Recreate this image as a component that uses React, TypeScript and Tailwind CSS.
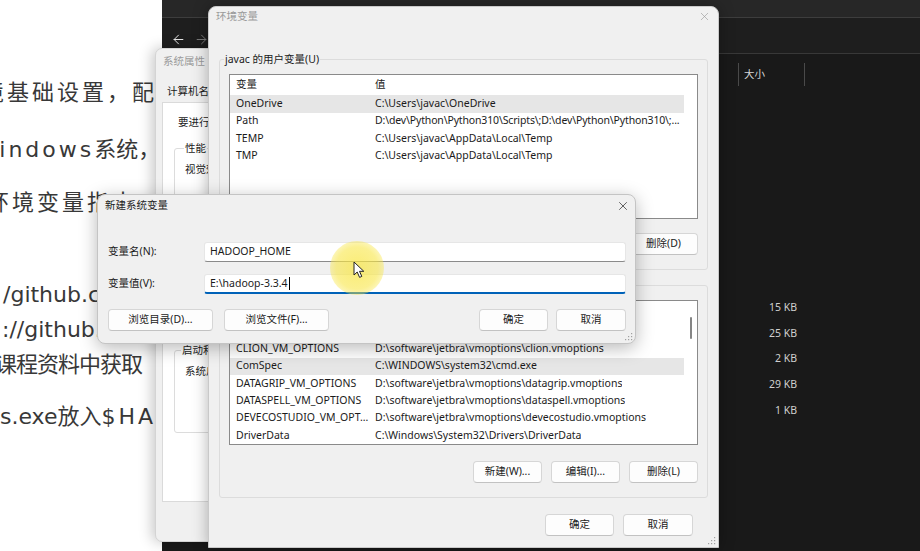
import React from 'react';
import { X, ArrowLeft, ArrowRight } from 'lucide-react';

const ui = "font-['Noto_Sans','Noto_Sans_CJK_SC',sans-serif] text-[10.5px] text-[#1b1b1b]";

interface VarRow {
  name: string;
  value: string;
  selected?: boolean;
  tight?: boolean;
}

const userVars: VarRow[] = [
  { name: 'OneDrive', value: 'C:\\Users\\javac\\OneDrive', selected: true },
  { name: 'Path', value: 'D:\\dev\\Python\\Python310\\Scripts\\;D:\\dev\\Python\\Python310\\;...', tight: true },
  { name: 'TEMP', value: 'C:\\Users\\javac\\AppData\\Local\\Temp' },
  { name: 'TMP', value: 'C:\\Users\\javac\\AppData\\Local\\Temp' },
];

const systemVars: VarRow[] = [
  { name: 'CLASSPATH', value: '.;%JAVA_HOME%\\lib' },
  { name: 'CLION_VM_OPTIONS', value: 'D:\\software\\jetbra\\vmoptions\\clion.vmoptions' },
  { name: 'ComSpec', value: 'C:\\WINDOWS\\system32\\cmd.exe', selected: true },
  { name: 'DATAGRIP_VM_OPTIONS', value: 'D:\\software\\jetbra\\vmoptions\\datagrip.vmoptions' },
  { name: 'DATASPELL_VM_OPTIONS', value: 'D:\\software\\jetbra\\vmoptions\\dataspell.vmoptions' },
  { name: 'DEVECOSTUDIO_VM_OPT...', value: 'D:\\software\\jetbra\\vmoptions\\devecostudio.vmoptions' },
  { name: 'DriverData', value: 'C:\\Windows\\System32\\Drivers\\DriverData' },
];

const sizes = ['15 KB', '25 KB', '2 KB', '29 KB', '1 KB'];

const Btn = ({ children, className = '' }: { children: React.ReactNode; className?: string }) => (
  <div
    className={`h-[22px] shrink-0 flex items-center justify-center bg-[#fdfdfd] border border-[#d6d6d6] border-b-[#c2c2c2] rounded-[4px] ${className}`}
  >
    {children}
  </div>
);

const ListBox = ({ rows, header, row, scroll }: { rows: VarRow[]; header: string; row: string; scroll?: boolean }) => (
  <div className="h-[145px] bg-white border border-[#8a8a8a] flex overflow-hidden">
    <div className="w-[454px] flex flex-col">
      <div className={`${header} shrink-0 flex items-center`}>
        <div className="w-[145px] pl-[6px]">变量</div>
        <div>值</div>
      </div>
      {rows.map((r) => (
        <div key={r.name} className={`${row} shrink-0 flex items-center ${r.selected ? 'bg-[#e6e6e6]' : ''}`}>
          <div className="w-[145px] shrink-0 pl-[6px] whitespace-nowrap overflow-hidden">{r.name}</div>
          <div className={`whitespace-nowrap overflow-hidden ${r.tight ? 'tracking-[-0.15px]' : ''}`}>{r.value}</div>
        </div>
      ))}
    </div>
    <div className="flex-1 flex justify-center">
      {scroll && <div className="mt-[16px] w-[2px] h-[22px] bg-[#858585] rounded-full" />}
    </div>
  </div>
);

const Grip = () => (
  <svg width="8" height="8" viewBox="0 0 8 8" className="fill-[#a0a0a0]">
    <rect x="6" y="0" width="1.2" height="1.2" />
    <rect x="3" y="3" width="1.2" height="1.2" />
    <rect x="6" y="3" width="1.2" height="1.2" />
    <rect x="0" y="6" width="1.2" height="1.2" />
    <rect x="3" y="6" width="1.2" height="1.2" />
    <rect x="6" y="6" width="1.2" height="1.2" />
  </svg>
);

export default function App() {
  return (
    <div className="relative w-[920px] h-[551px] overflow-hidden bg-white">
      {/* slide text behind the windows */}
      <div className="flex flex-col pt-[79px] whitespace-nowrap font-['DejaVu_Sans','Noto_Sans_CJK_SC',sans-serif] text-[22px] leading-[28px] text-[#383838]">
        <div className="-ml-[18px] tracking-[3px]">境基础设置，配置环境变量</div>
        <div className="mt-[29px] -ml-[25px]">
          <span className="tracking-[3px]">Windows</span>系统，配置
        </div>
        <div className="mt-[25px] -ml-[13px] tracking-[3px]">环境变量指南</div>
        <div className="mt-[64px] ml-[3px]">/github.com/cdarlint/winutils</div>
        <div className="mt-[7px] ml-[2px]">://github.com/steveloughran</div>
        <div className="mt-[7px] -ml-[5px] tracking-[-1px]">课程资料中获取</div>
        <div className="mt-[24px] ml-0">
          s.exe放入<span className="tracking-[3px]">$HADOOP_HOME/bin</span>
        </div>
      </div>

      {/* dark file explorer */}
      <div className={`${ui} absolute left-[162px] top-0 right-0 bottom-0 bg-[#191919] flex flex-col`}>
        <div className="h-[18px] shrink-0 bg-[#272727] border-b border-[#3d3d3d]" />
        <div className="h-[36px] shrink-0 bg-[#1e1e1e] border-b border-[#383838] flex items-center pt-[8px] pl-[9px] gap-[8px]">
          <ArrowLeft size={15} strokeWidth={1.6} className="text-[#e6e6e6]" />
          <ArrowRight size={15} strokeWidth={1.6} className="text-[#7a7a7a]" />
        </div>
        <div className="mt-[9px] ml-[576px] w-[67px] h-[23px] border-l border-r border-[#4a4a4a] flex items-center pl-[5px] text-[#d6d6d6]">
          大小
        </div>
        <div className="mt-[209px] w-[635px] flex flex-col">
          {sizes.map((s) => (
            <div key={s} className="h-[25.7px] flex items-center justify-end text-[#cfcfcf]">
              {s}
            </div>
          ))}
        </div>
      </div>

      {/* 系统属性 window */}
      <div className={`${ui} absolute left-[155px] top-[48px] w-[420px] h-[494px] bg-[#f0f0f0] rounded-[7px] border border-[#d4d4d4] shadow-[-3px_0_14px_rgba(0,0,0,0.22)] flex flex-col pl-[6px]`}>
        <div className="h-[25px] flex items-center pl-[1px] text-[#9a9a9a]">系统属性</div>
        <div className="mt-[8px] h-[20px] flex items-center pl-[5px] gap-[14px]">
          <span>计算机名</span>
          <span>硬件</span>
          <span>高级</span>
        </div>
        <div className="h-[400px] w-[400px] bg-white border border-[#dadada] flex flex-col pl-[11px]">
          <div className="mt-[12px] h-[14px] pl-[4px] leading-[14px]">要进行大多数更改，你必须作为管理员登录。</div>
          <fieldset className="mt-[12px] h-[70px] w-[380px] border border-[#dcdcdc] rounded-[3px] px-[9px]">
            <legend className="px-[1px] leading-[14px]">性能</legend>
            <div className="mt-[7px] pl-[1px]">视觉效果，处理器计划，内存使用，以及虚拟内存</div>
          </fieldset>
          <fieldset className="mt-[10px] h-[110px] w-[380px] border border-[#dcdcdc] rounded-[3px] px-[9px]">
            <legend className="px-[1px] leading-[14px]">用户配置文件</legend>
            <div className="mt-[7px]">与登录帐户相关的桌面设置</div>
          </fieldset>
          <fieldset className="mt-[12px] h-[90px] w-[380px] border border-[#dcdcdc] rounded-[3px] px-[9px]">
            <legend className="-ml-[3px] px-[1px] leading-[14px]">启动和故障恢复</legend>
            <div className="mt-[7px] pl-[1px]">系统启动、系统故障和调试信息</div>
          </fieldset>
        </div>
      </div>

      {/* 环境变量 window */}
      <div className={`${ui} absolute left-[208px] top-[6px] w-[511px] h-[542px] bg-[#f0f0f0] rounded-t-[8px] border border-[#c9c9c9] shadow-[0_0_16px_rgba(0,0,0,0.3)] flex flex-col`}>
        <div className="h-[19px] shrink-0 flex items-center justify-between pl-[7px] pr-[7px] text-[#9a9a9a]">
          <span>环境变量</span>
          <X size={13} strokeWidth={1.2} className="text-[#9a9a9a]" />
        </div>
        <fieldset className="mt-[26px] ml-[10px] w-[489px] border border-[#dcdcdc] rounded-[3px] px-[9px] pt-[8px] pb-[14px]">
          <legend className="-ml-[5px] px-[1px] leading-[14px]">javac 的用户变量(U)</legend>
          <ListBox rows={userVars} header="h-[20px]" row="h-[17.5px]" />
          <div className="mt-[14px] flex justify-end gap-[9px]">
            <Btn className="w-[69px]">新建(N)...</Btn>
            <Btn className="w-[69px]">编辑(E)...</Btn>
            <Btn className="w-[69px]">删除(D)</Btn>
          </div>
        </fieldset>
        <fieldset className="mt-[8px] ml-[10px] w-[489px] border border-[#dcdcdc] rounded-[3px] px-[9px] pt-[8px] pb-[14px]">
          <legend className="-ml-[5px] px-[1px] leading-[14px]">系统变量(S)</legend>
          <ListBox rows={systemVars} header="h-[22px]" row="h-[17.3px]" scroll />
          <div className="mt-[16px] flex justify-end gap-[9px]">
            <Btn className="w-[69px]">新建(W)...</Btn>
            <Btn className="w-[69px]">编辑(I)...</Btn>
            <Btn className="w-[69px]">删除(L)</Btn>
          </div>
        </fieldset>
        <div className="mt-[16px] flex justify-end gap-[9px] pr-[25px]">
          <Btn className="w-[69px]">确定</Btn>
          <Btn className="w-[70px]">取消</Btn>
        </div>
        <div className="mt-auto self-end mr-[2px] mb-[2px]">
          <Grip />
        </div>
      </div>

      {/* 新建系统变量 dialog */}
      <div className={`${ui} absolute left-[97px] top-[194px] w-[539px] h-[150px] bg-[#f0f0f0] rounded-[8px] border border-[#c4c4c4] shadow-[0_4px_18px_rgba(0,0,0,0.28)] flex flex-col pl-[10px] pr-[9px]`}>
        <div className="h-[22px] shrink-0 flex items-center justify-between -ml-[3px] -mr-[4px]">
          <span>新建系统变量</span>
          <X size={14} strokeWidth={1.3} className="text-[#333]" />
        </div>
        <div className="mt-[25px] flex items-center">
          <div className="w-[96px] shrink-0">变量名(N):</div>
          <div className="flex-1 h-[20px] bg-white border border-[#e6e6e6] border-b-[#8a8a8a] rounded-[3px] flex items-center pl-[5px]">
            HADOOP_HOME
          </div>
        </div>
        <div className="mt-[12px] flex items-center">
          <div className="w-[96px] shrink-0">变量值(V):</div>
          <div className="flex-1 h-[20px] bg-white border border-[#e6e6e6] border-b-2 border-b-[#0062b8] rounded-[3px] flex items-center pl-[5px]">
            <span>E:\hadoop-3.3.4</span>
            <span className="inline-block w-px h-[13px] bg-black ml-[1px]" />
          </div>
        </div>
        <div className="mt-[15px] flex items-center">
          <Btn className="w-[105px]">浏览目录(D)...</Btn>
          <Btn className="w-[105px] ml-[11px]">浏览文件(F)...</Btn>
          <Btn className="w-[69px] ml-auto">确定</Btn>
          <Btn className="w-[70px] ml-[8px]">取消</Btn>
        </div>
        <div className="mt-auto self-end -mr-[7px] mb-[2px]">
          <Grip />
        </div>
      </div>

      {/* pointer highlight and cursor */}
      <div className="absolute left-[330px] top-[241px] w-[54px] h-[54px] rounded-full bg-[radial-gradient(circle,rgba(248,230,70,0.75)_0%,rgba(248,230,70,0.6)_55%,rgba(248,230,70,0)_100%)]" />
      <svg className="absolute left-[353px] top-[261px]" width="12" height="18" viewBox="0 0 12 18">
        <path d="M1 1 L1 14 L4.2 11 L6.6 16.4 L8.8 15.4 L6.5 10.3 L10.8 10.3 Z" fill="#fff" stroke="#222" strokeWidth="1" strokeLinejoin="round" />
      </svg>
    </div>
  );
}
